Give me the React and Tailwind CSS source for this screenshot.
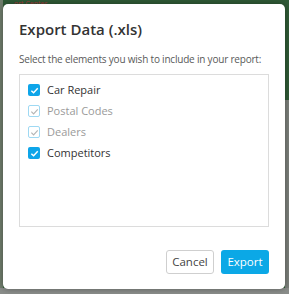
import React, { useState } from 'react';

const items = [
  { label: 'Car Repair', checked: true, disabled: false },
  { label: 'Postal Codes', checked: true, disabled: true },
  { label: 'Dealers', checked: true, disabled: true },
  { label: 'Competitors', checked: true, disabled: false },
];

function Check({ checked, disabled }) {
  if (disabled) {
    return (
      <span className="w-[12px] h-[12px] rounded-[2px] border border-[#9fd9f3] bg-white flex items-center justify-center">
        <svg width="9" height="9" viewBox="0 0 10 10" fill="none">
          <path d="M1.5 5.2 L4 7.6 L8.6 2.6" stroke="#b5b5b5" strokeWidth="1.3" />
        </svg>
      </span>
    );
  }
  return (
    <span className="w-[12px] h-[12px] rounded-[2px] bg-[#0ea5e9] flex items-center justify-center">
      {checked && (
        <svg width="9" height="9" viewBox="0 0 10 10" fill="none">
          <path d="M1.5 5.2 L4 7.6 L8.6 2.6" stroke="#fff" strokeWidth="1.6" />
        </svg>
      )}
    </span>
  );
}

export default function App() {
  const [list] = useState(items);

  return (
    <div className="w-[289px] h-[294px] bg-[#2f5a36] relative overflow-hidden font-['Open_Sans',sans-serif]">
      {/* map backdrop */}
      <div className="absolute left-[14px] top-0 text-[7px] text-[#a8383a] leading-none">ort Center</div>
      <div className="absolute left-0 top-0 w-[3px] h-full bg-[#6f7d6c]" />
      <div className="absolute right-0 top-[100px] w-[4px] h-[194px] bg-[#7b7f7a]" />
      <div className="absolute left-0 bottom-0 w-full h-[6px] bg-[#8a8d8a]" />

      {/* dialog */}
      <div className="absolute left-[3px] top-[4px] w-[282px] h-[285px] bg-white rounded-[5px] shadow-[0_0_6px_rgba(0,0,0,0.35)] flex flex-col px-[16px]">
        <h2 className="mt-[14px] text-[15px] leading-[22px] font-semibold text-[#333]">Export Data (.xls)</h2>
        <p className="mt-[12px] text-[10px] leading-[14px] tracking-[-0.2px] whitespace-nowrap text-[#595959]">
          Select the elements you wish to include in your report:
        </p>
        <div className="mt-[8px] h-[153px] border border-[#dcdcdc] pt-[9px] pl-[8px] flex flex-col gap-[9px]">
          {list.map((it) => (
            <label key={it.label} className="flex items-center gap-[7px] h-[12px]">
              <Check checked={it.checked} disabled={it.disabled} />
              <span className={`text-[11px] ${it.disabled ? 'text-[#9a9a9a]' : 'text-[#333]'}`}>{it.label}</span>
            </label>
          ))}
        </div>
        <div className="mt-auto mb-[15px] flex justify-end gap-[7px]">
          <button className="w-[48px] h-[24px] rounded-[3px] border border-[#cfcfcf] bg-white text-[11.5px] text-[#444]">
            Cancel
          </button>
          <button className="w-[48px] h-[24px] rounded-[3px] bg-[#0ba8e6] text-[11.5px] text-white font-medium">
            Export
          </button>
        </div>
      </div>
    </div>
  );
}
